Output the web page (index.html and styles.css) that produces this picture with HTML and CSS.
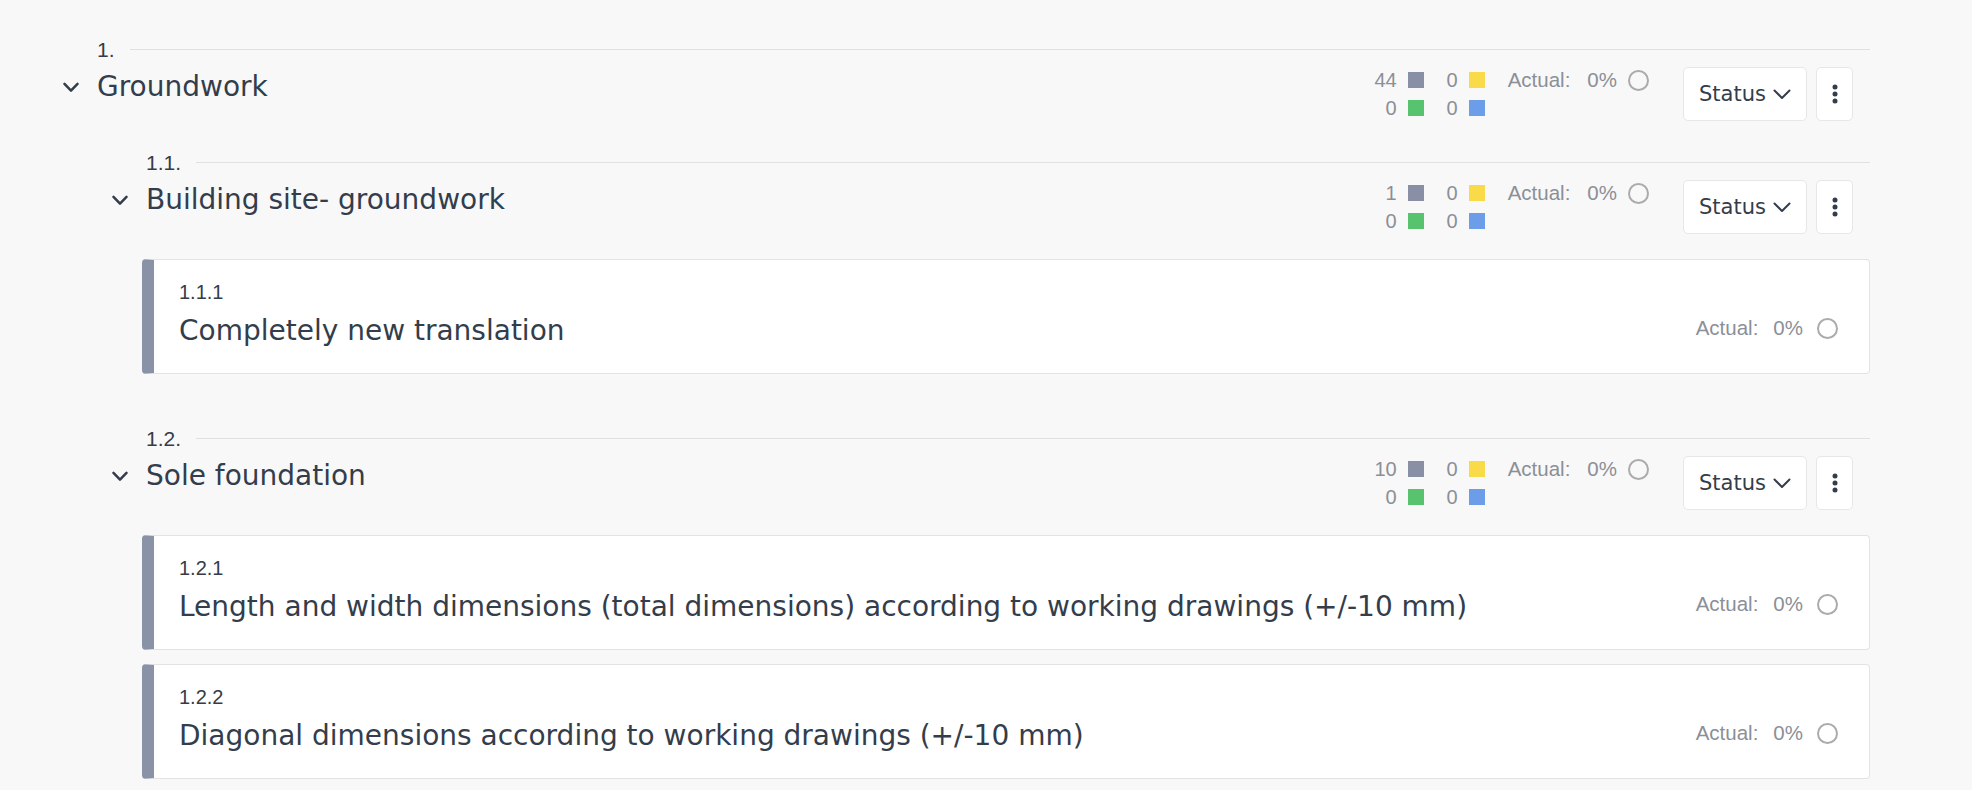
FILE: index.html
```html
<!DOCTYPE html>
<html lang="en">
<head>
<meta charset="utf-8">
<title>Checklist</title>
<link rel="stylesheet" href="styles.css">
</head>
<body>
<div class="tree">
  <section class="section">
    <div class="sec-num"><span class="num">1.</span><span class="rule"></span></div>
    <div class="sec-head">
      <div class="head-title">
        <svg class="chev" width="16" height="11" viewBox="0 0 16 11"><path d="M1.5 1.8 L8 8.6 L14.5 1.8" fill="none" stroke="#333d4b" stroke-width="2.5" stroke-linecap="round" stroke-linejoin="round"/></svg>
        <h2 class="title">Groundwork</h2>
      </div>
      <div class="meta">
        <div class="stats">
          <div class="stat"><span class="stat-n">44</span><span class="sq sq-gray"></span></div>
          <div class="stat"><span class="stat-n">0</span><span class="sq sq-yellow"></span></div>
          <div class="stat"><span class="stat-n">0</span><span class="sq sq-green"></span></div>
          <div class="stat"><span class="stat-n">0</span><span class="sq sq-blue"></span></div>
        </div>
        <div class="actual"><span class="actual-l">Actual:</span><span class="actual-v">0%</span><span class="ring"></span></div>
      </div>
      <button class="btn status">Status<svg width="18" height="11" viewBox="0 0 18 11"><path d="M1.5 1.5 L9 9 L16.5 1.5" fill="none" stroke="#333d4b" stroke-width="2" stroke-linecap="round" stroke-linejoin="round"/></svg></button>
      <button class="btn kebab"><svg width="6" height="20" viewBox="0 0 6 20"><circle cx="3" cy="3" r="2.5" fill="#333d4b"/><circle cx="3" cy="10" r="2.5" fill="#333d4b"/><circle cx="3" cy="17" r="2.5" fill="#333d4b"/></svg></button>
    </div>

    <div class="children">
      <section class="section sub">
        <div class="sec-num"><span class="num">1.1.</span><span class="rule"></span></div>
        <div class="sec-head">
          <div class="head-title">
            <svg class="chev" width="16" height="11" viewBox="0 0 16 11"><path d="M1.5 1.8 L8 8.6 L14.5 1.8" fill="none" stroke="#333d4b" stroke-width="2.5" stroke-linecap="round" stroke-linejoin="round"/></svg>
            <h2 class="title">Building site- groundwork</h2>
          </div>
          <div class="meta">
            <div class="stats">
              <div class="stat"><span class="stat-n">1</span><span class="sq sq-gray"></span></div>
              <div class="stat"><span class="stat-n">0</span><span class="sq sq-yellow"></span></div>
              <div class="stat"><span class="stat-n">0</span><span class="sq sq-green"></span></div>
              <div class="stat"><span class="stat-n">0</span><span class="sq sq-blue"></span></div>
            </div>
            <div class="actual"><span class="actual-l">Actual:</span><span class="actual-v">0%</span><span class="ring"></span></div>
          </div>
          <button class="btn status">Status<svg width="18" height="11" viewBox="0 0 18 11"><path d="M1.5 1.5 L9 9 L16.5 1.5" fill="none" stroke="#333d4b" stroke-width="2" stroke-linecap="round" stroke-linejoin="round"/></svg></button>
          <button class="btn kebab"><svg width="6" height="20" viewBox="0 0 6 20"><circle cx="3" cy="3" r="2.5" fill="#333d4b"/><circle cx="3" cy="10" r="2.5" fill="#333d4b"/><circle cx="3" cy="17" r="2.5" fill="#333d4b"/></svg></button>
        </div>
        <div class="cards">
          <div class="card">
            <div class="card-num">1.1.1</div>
            <div class="card-row">
              <div class="card-title">Completely new translation</div>
              <div class="actual"><span class="actual-l">Actual:</span><span class="actual-v">0%</span><span class="ring"></span></div>
            </div>
          </div>
        </div>
      </section>

      <section class="section sub">
        <div class="sec-num"><span class="num">1.2.</span><span class="rule"></span></div>
        <div class="sec-head">
          <div class="head-title">
            <svg class="chev" width="16" height="11" viewBox="0 0 16 11"><path d="M1.5 1.8 L8 8.6 L14.5 1.8" fill="none" stroke="#333d4b" stroke-width="2.5" stroke-linecap="round" stroke-linejoin="round"/></svg>
            <h2 class="title">Sole foundation</h2>
          </div>
          <div class="meta">
            <div class="stats">
              <div class="stat"><span class="stat-n">10</span><span class="sq sq-gray"></span></div>
              <div class="stat"><span class="stat-n">0</span><span class="sq sq-yellow"></span></div>
              <div class="stat"><span class="stat-n">0</span><span class="sq sq-green"></span></div>
              <div class="stat"><span class="stat-n">0</span><span class="sq sq-blue"></span></div>
            </div>
            <div class="actual"><span class="actual-l">Actual:</span><span class="actual-v">0%</span><span class="ring"></span></div>
          </div>
          <button class="btn status">Status<svg width="18" height="11" viewBox="0 0 18 11"><path d="M1.5 1.5 L9 9 L16.5 1.5" fill="none" stroke="#333d4b" stroke-width="2" stroke-linecap="round" stroke-linejoin="round"/></svg></button>
          <button class="btn kebab"><svg width="6" height="20" viewBox="0 0 6 20"><circle cx="3" cy="3" r="2.5" fill="#333d4b"/><circle cx="3" cy="10" r="2.5" fill="#333d4b"/><circle cx="3" cy="17" r="2.5" fill="#333d4b"/></svg></button>
        </div>
        <div class="cards">
          <div class="card">
            <div class="card-num">1.2.1</div>
            <div class="card-row">
              <div class="card-title">Length and width dimensions (total dimensions) according to working drawings (+/-10 mm)</div>
              <div class="actual"><span class="actual-l">Actual:</span><span class="actual-v">0%</span><span class="ring"></span></div>
            </div>
          </div>
          <div class="card">
            <div class="card-num">1.2.2</div>
            <div class="card-row">
              <div class="card-title">Diagonal dimensions according to working drawings (+/-10 mm)</div>
              <div class="actual"><span class="actual-l">Actual:</span><span class="actual-v">0%</span><span class="ring"></span></div>
            </div>
          </div>
        </div>
      </section>
    </div>
  </section>
</div>
</body>
</html>
```
FILE: styles.css
```css
html, body {
  margin: 0;
  padding: 0;
  background: #f8f8f8;
  overflow: hidden;
}
body {
  font-family: "Liberation Sans", Arial, sans-serif;
  color: #333d4b;
}
.tree {
  padding: 38px 102px 0 63px;
}
.section {
  display: flex;
  flex-direction: column;
}
.sub {
  padding-top: 4px;
}
.sec-num {
  display: flex;
  align-items: center;
  height: 23px;
  padding-left: 34px;
}
.num {
  font-size: 21px;
  line-height: 23px;
  color: #353c47;
}
.rule {
  flex: 1;
  height: 1px;
  background: #e0e0e0;
  margin-left: 15px;
}
.sec-head {
  display: flex;
  align-items: flex-start;
  margin-top: 6px;
  padding-right: 17px;
}
.head-title {
  flex: 1;
  display: flex;
  align-items: center;
  height: 40px;
  min-width: 0;
}
.chev {
  flex: none;
  margin-right: 18px;
}
.title {
  margin: 0;
  font-family: "DejaVu Sans", sans-serif;
  font-weight: normal;
  font-size: 28px;
  line-height: 40px;
  color: #333d4b;
  white-space: nowrap;
}
.meta {
  display: flex;
  align-items: flex-start;
  margin-top: -1px;
  margin-right: 34px;
}
.stats {
  display: grid;
  grid-template-columns: auto auto;
  column-gap: 8px;
}
.stat {
  display: flex;
  align-items: center;
  height: 28px;
  gap: 11px;
}
.stat-n {
  min-width: 26px;
  text-align: right;
  font-size: 20px;
  line-height: 28px;
  color: #8b8f97;
}
.sq {
  width: 16px;
  height: 16px;
}
.sq-gray { background: #8990a6; }
.sq-yellow { background: #f9da48; }
.sq-green { background: #58c36f; }
.sq-blue { background: #6b9de9; }
.actual {
  display: flex;
  align-items: center;
  height: 28px;
  margin-left: 23px;
  font-size: 20.5px;
  color: #8b8f97;
  flex: none;
}
.actual-l {
  margin-right: 17px;
}
.ring {
  width: 17px;
  height: 17px;
  border: 2px solid #ababab;
  border-radius: 50%;
  margin-left: 11px;
}
.btn {
  display: flex;
  align-items: center;
  justify-content: center;
  height: 54px;
  background: #ffffff;
  border: 1px solid #e7e7e7;
  border-radius: 5px;
  padding: 0;
  cursor: pointer;
  flex: none;
}
.status {
  width: 124px;
  gap: 7px;
  font-family: "DejaVu Sans", sans-serif;
  font-size: 21px;
  color: #333d4b;
}
.kebab {
  width: 37px;
  margin-left: 9px;
}
.children {
  display: flex;
  flex-direction: column;
  margin-left: 49px;
  padding-top: 25px;
}
.cards {
  display: flex;
  flex-direction: column;
  gap: 14px;
  margin-left: 30px;
  padding: 24px 0 49px;
}
.card {
  background: #ffffff;
  border: 1px solid #e3e3e3;
  border-left: 12px solid #8a92a8;
  border-radius: 4px;
  padding: 21px 31px 24px 25px;
}
.card-num {
  font-size: 20px;
  line-height: 23px;
  color: #353c47;
}
.card-row {
  display: flex;
  align-items: center;
  margin-top: 9px;
}
.card-title {
  flex: 1;
  font-family: "DejaVu Sans", sans-serif;
  font-size: 28px;
  line-height: 36px;
  color: #333d4b;
  white-space: nowrap;
}
.card-row .actual {
  margin-bottom: 6px;
}
.card-row .actual-l {
  margin-right: 15px;
}
.card-row .ring {
  margin-left: 14px;
}
```
